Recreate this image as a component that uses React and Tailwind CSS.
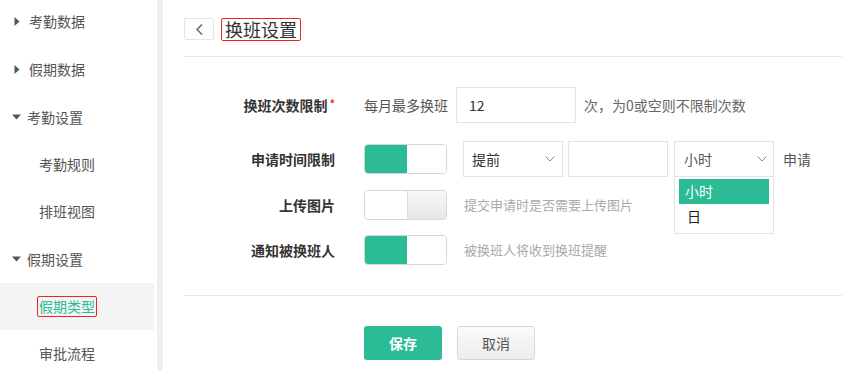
import React from 'react';

const font = { fontFamily: '"Noto Sans CJK SC", "Noto Sans", sans-serif' };

const navItems = [
  { label: '考勤数据', type: 'group', open: false },
  { label: '假期数据', type: 'group', open: false },
  { label: '考勤设置', type: 'group', open: true },
  { label: '考勤规则', type: 'item' },
  { label: '排班视图', type: 'item' },
  { label: '假期设置', type: 'group', open: true },
  { label: '假期类型', type: 'item', active: true },
  { label: '审批流程', type: 'item' }
];

function Caret({ open }) {
  return open ? (
    <svg width="9" height="6" viewBox="0 0 9 6" className="mr-[6px]">
      <path d="M0 0.5 L9 0.5 L4.5 5.5 Z" fill="#555" />
    </svg>
  ) : (
    <svg width="6" height="9" viewBox="0 0 6 9" className="ml-[2px] mr-[9px]">
      <path d="M0.5 0 L5.5 4.5 L0.5 9 Z" fill="#555" />
    </svg>
  );
}

function Sidebar() {
  return (
    <div className="w-[157px] shrink-0 h-full flex flex-col border-r-[6px] border-[#f0f0f0] box-content">
      <div className="w-[154px] flex flex-col">
        {navItems.map((item) => {
          if (item.type === 'group') {
            return (
              <div key={item.label} className="h-[48px] flex items-center pl-[12px] text-[14px] text-[#555]" style={{ marginTop: item.label === '考勤数据' ? -3 : 0 }}>
                <Caret open={item.open} />
                <span>{item.label}</span>
              </div>
            );
          }
          return (
            <div key={item.label} className={`h-[47px] flex items-center pl-[39px] text-[14px] ${item.active ? 'bg-[#f4f4f4] text-[#2bbc96]' : 'text-[#555]'}`}>
              {item.active ? (
                <span className="border border-[#f02222] rounded-[2px] px-[1px] leading-[19px] -ml-[2px]">{item.label}</span>
              ) : (
                <span>{item.label}</span>
              )}
            </div>
          );
        })}
      </div>
    </div>
  );
}

function Chevron() {
  return (
    <svg width="10" height="6" viewBox="0 0 10 6">
      <path d="M0.5 0.5 L5 5 L9.5 0.5" fill="none" stroke="#888" strokeWidth="1" />
    </svg>
  );
}

function Toggle({ on }) {
  return (
    <div className="w-[83px] h-[30px] rounded-[4px] border border-[#d6d6d6] flex overflow-hidden bg-white">
      {on ? (
        <>
          <div className="w-[42px] h-full bg-[#2bbc96]" />
          <div className="flex-1 bg-white" />
        </>
      ) : (
        <>
          <div className="w-[42px] h-full bg-white" />
          <div className="flex-1 border-l border-[#dcdcdc] bg-gradient-to-b from-[#f8f8f8] to-[#e6e6e6]" />
        </>
      )}
    </div>
  );
}

function Label({ children, required }) {
  return (
    <div className="w-[180px] shrink-0 text-right pr-[29px] text-[14px] font-bold text-[#333] flex justify-end items-center">
      <span>{children}</span>
      {required && <span className="text-[#e33] ml-[2px] text-[11px] -mt-[4px]">*</span>}
    </div>
  );
}

export default function App() {
  return (
    <div className="w-[842px] h-[371px] bg-white flex overflow-hidden" style={font}>
      <Sidebar />
      <div className="flex-1 pl-[21px] flex flex-col">
        <div className="h-[57px] flex items-center gap-[7px] border-b border-[#e8e8e8] pt-[12px] pb-[10px]">
          <div className="w-[30px] h-[22px] border border-[#e4e4e4] rounded-[2px] flex items-center justify-center">
            <svg width="7" height="11" viewBox="0 0 7 11">
              <path d="M6 0.5 L1 5.5 L6 10.5" fill="none" stroke="#666" strokeWidth="1.5" />
            </svg>
          </div>
          <div className="h-[23px] border border-[#f02222] rounded-[2px] px-[3px] flex items-center text-[18px] text-[#333] leading-none">换班设置</div>
        </div>

        <div className="flex flex-col pt-[30px]">
          <div className="h-[36px] flex items-center">
            <Label required>换班次数限制</Label>
            <span className="text-[14px] text-[#555] mr-[8px]">每月最多换班</span>
            <div className="w-[120px] h-[36px] border border-[#e2e2e2] flex items-center pl-[12px] text-[14px] text-[#333]">12</div>
            <span className="text-[14px] text-[#666] ml-[8px]">次，为0或空则不限制次数</span>
          </div>

          <div className="h-[36px] flex items-center mt-[18px]">
            <Label>申请时间限制</Label>
            <Toggle on />
            <div className="w-[100px] h-[36px] border border-[#e2e2e2] flex items-center justify-between pl-[8px] pr-[7px] ml-[16px] text-[14px] text-[#333]">
              <span>提前</span>
              <Chevron />
            </div>
            <div className="w-[100px] h-[36px] border border-[#e2e2e2] ml-[5px]" />
            <div className="relative ml-[6px]">
              <div className="w-[100px] h-[36px] border border-[#e2e2e2] flex items-center justify-between pl-[9px] pr-[6px] text-[14px] text-[#555]">
                <span>小时</span>
                <Chevron />
              </div>
              <div className="absolute left-0 top-[35px] w-[100px] h-[58px] border border-[#e2e2e2] bg-white px-[4px] pt-[2px] z-10">
                <div className="h-[25px] bg-[#2bbc96] text-white text-[14px] flex items-center pl-[6px]">小时</div>
                <div className="h-[25px] text-[#222] text-[14px] flex items-center pl-[8px]">日</div>
              </div>
            </div>
            <span className="text-[14px] text-[#555] ml-[9px]">申请</span>
          </div>

          <div className="h-[30px] flex items-center mt-[13px]">
            <Label>上传图片</Label>
            <Toggle on={false} />
            <span className="text-[13px] text-[#aaa] ml-[17px]">提交申请时是否需要上传图片</span>
          </div>

          <div className="h-[30px] flex items-center mt-[15px]">
            <Label>通知被换班人</Label>
            <Toggle on />
            <span className="text-[13px] text-[#aaa] ml-[17px]">被换班人将收到换班提醒</span>
          </div>
        </div>

        <div className="border-b border-[#e8e8e8] mt-[30px]" />

        <div className="flex items-center gap-[15px] pl-[180px] mt-[30px]">
          <button className="w-[78px] h-[34px] rounded-[3px] bg-[#2bbc96] text-white text-[14px] font-bold">保存</button>
          <button className="w-[78px] h-[34px] rounded-[3px] border border-[#d8d8d8] bg-gradient-to-b from-[#fbfbfb] to-[#ececec] text-[#555] text-[14px]">取消</button>
        </div>
      </div>
    </div>
  );
}
